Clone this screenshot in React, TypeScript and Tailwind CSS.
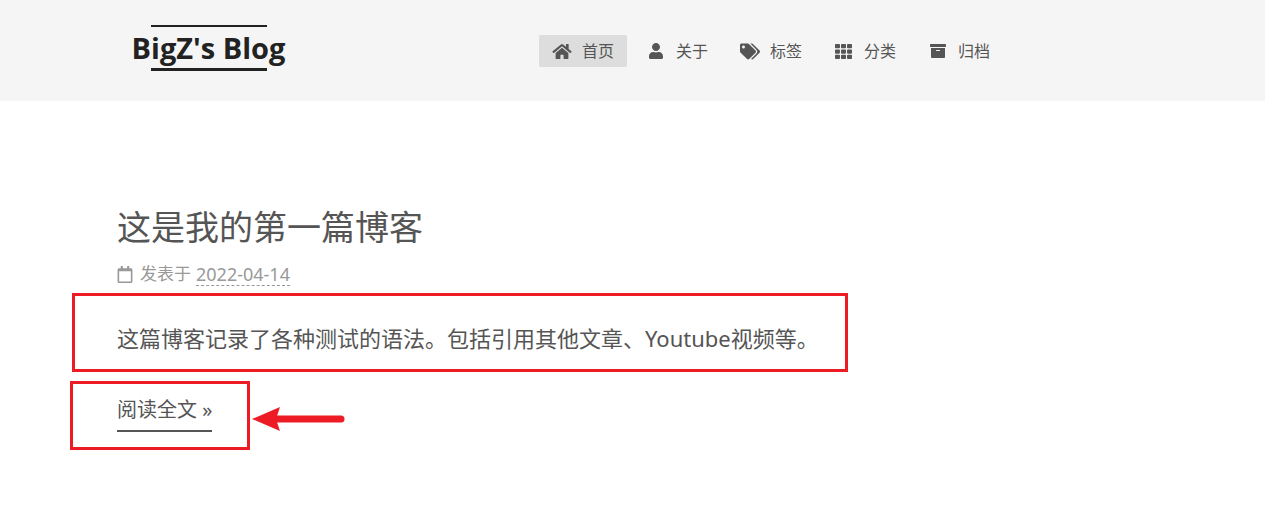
import type { IconType } from "react-icons";
import { FaArchive, FaHome, FaRegCalendar, FaTags, FaTh, FaUser } from "react-icons/fa";

const items: { label: string; icon: IconType; size: string; active?: boolean }[] = [
  { label: "首页", icon: FaHome, size: "h-[17px] w-5", active: true },
  { label: "关于", icon: FaUser, size: "h-4 w-4" },
  { label: "标签", icon: FaTags, size: "h-[17px] w-5" },
  { label: "分类", icon: FaTh, size: "h-[17px] w-[17px]" },
  { label: "归档", icon: FaArchive, size: "h-4 w-4" },
];

function Header() {
  return (
    <header className="flex h-[101px] items-start bg-[#f5f5f5] pl-[131px]">
      <a href="#" className="mt-[25px] flex w-[155px] flex-col items-center text-[#222]">
        <span className="h-[2px] w-[116px] bg-[#222]" />
        <span className="font-['Open_Sans','Noto_Sans',sans-serif] text-[29px] leading-[41px] font-bold whitespace-nowrap">
          BigZ's Blog
        </span>
        <span className="h-[3px] w-[116px] bg-[#222]" />
      </a>
      <nav className="mt-[35px] ml-[253px]">
        <ul className="flex gap-[6px]">
          {items.map(({ label, icon: Icon, size, active }) => (
            <li key={label}>
              <a
                href="#"
                className={`flex h-8 w-[88px] items-center rounded-[2px] pl-3 text-[16px] whitespace-nowrap ${active ? "bg-[#ddd]" : ""}`}
              >
                <span className="mr-[10px] flex w-[21px] shrink-0 justify-center">
                  <Icon className={size} />
                </span>
                {label}
              </a>
            </li>
          ))}
        </ul>
      </nav>
    </header>
  );
}

export default function App() {
  return (
    <div className="min-h-screen bg-white font-['Noto_Sans','Noto_Sans_CJK_SC',sans-serif] text-[#555]">
      <Header />
      <main className="pt-[100px] pl-[70px]">
        <article>
          <div className="pl-[47px]">
            <h1 className="text-[34px] leading-[52px]">
              <a href="#">这是我的第一篇博客</a>
            </h1>
            <div className="mt-[9px] flex h-6 items-center text-[17px] leading-6 text-[#999]">
              <FaRegCalendar className="mr-[7px] h-[17px] w-4" />
              <span className="mr-[5px]">发表于</span>
              <time dateTime="2022-04-14" className="border-b border-dashed border-[#999] text-[18px] leading-[22px]">
                2022-04-14
              </time>
            </div>
          </div>
          <div className="mt-[7px] ml-[2px] flex h-[79px] w-[776px] items-center border-3 border-[#ed1c24] pt-[10px] pl-[42px]">
            <p className="text-[22px] leading-8 whitespace-nowrap">
              这篇博客记录了各种测试的语法。包括引用其他文章、Youtube视频等。
            </p>
          </div>
          <div className="mt-[9px] flex items-center">
            <div className="h-[69px] w-[180px] border-3 border-[#ed1c24] pt-[11px] pl-11">
              <a href="#" className="inline-block border-b-2 border-[#555] pb-[6px] text-[20px] leading-[29px]">
                阅读全文 »
              </a>
            </div>
            <svg className="mt-[7px] ml-[2px]" width="93" height="26" viewBox="0 0 93 26" fill="none" aria-hidden="true">
              <path d="M0 13L28 1L24 13L28 25Z" fill="#ed1c24" />
              <path d="M22 13H89" stroke="#ed1c24" strokeWidth="7" strokeLinecap="round" />
            </svg>
          </div>
        </article>
      </main>
    </div>
  );
}
